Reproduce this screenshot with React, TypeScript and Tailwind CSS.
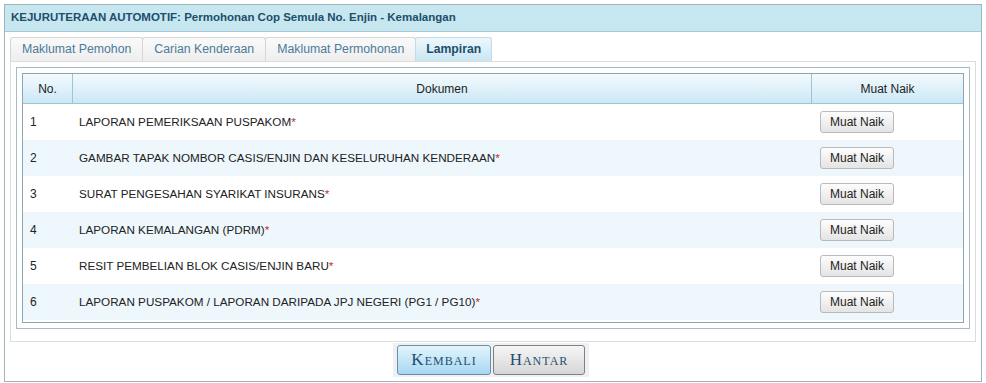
import React from 'react';

const rows = [
  'LAPORAN PEMERIKSAAN PUSPAKOM',
  'GAMBAR TAPAK NOMBOR CASIS/ENJIN DAN KESELURUHAN KENDERAAN',
  'SURAT PENGESAHAN SYARIKAT INSURANS',
  'LAPORAN KEMALANGAN (PDRM)',
  'RESIT PEMBELIAN BLOK CASIS/ENJIN BARU',
  'LAPORAN PUSPAKOM / LAPORAN DARIPADA JPJ NEGERI (PG1 / PG10)',
];

const tabs = ['Maklumat Pemohon', 'Carian Kenderaan', 'Maklumat Permohonan'];

export default function App() {
  return (
    <div className="w-[986px] h-[383px] bg-white pt-[4px] px-[4px] font-['Liberation_Sans',Arial,sans-serif] text-[12px] text-[#333]">
      <div className="h-[378px] border border-[#9fb4bc] flex flex-col">
        {/* Title */}
        <div className="h-[27px] shrink-0 bg-[#c6e6f0] border-b border-[#a9c9d4] flex items-center px-[6px] font-bold text-[11.5px] text-[#1d4e6b]">
          KEJURUTERAAN AUTOMOTIF: Permohonan Cop Semula No. Enjin - Kemalangan
        </div>

        <div className="px-[5px] pt-[5px] flex flex-col">
          {/* Tabs */}
          <div className="flex h-[24px] items-end">
            {tabs.map((t) => (
              <div
                key={t}
                className="h-[24px] px-[11px] flex items-center border border-b-0 border-[#d6d6d6] -mr-px rounded-t-[3px] bg-gradient-to-b from-[#fafafa] to-[#eeeeee] text-[#4a7c98] text-[12.3px]"
              >
                {t}
              </div>
            ))}
            <div className="h-[24px] px-[10px] flex items-center border border-b-0 border-[#c3dbe6] rounded-t-[3px] bg-gradient-to-b from-[#eef8fc] to-[#c9e6f3] text-[#1d4e6b] font-bold text-[12.2px]">
              Lampiran
            </div>
          </div>

          {/* Tab panel */}
          <div className="border border-[#dcdcdc] p-[5px] pb-[12px] h-[281px]">
            <div className="border border-[#a7bbc3] p-[5px] h-[262px]">
              <div className="border border-[#8ea6b2] h-[250px]">
                <div className="flex h-[30px] bg-gradient-to-b from-[#f3fafd] to-[#cbe8f6] border-b border-[#9ec3d6] text-[#222]">
                  <div className="w-[50px] shrink-0 border-r border-[#9ec3d6] flex items-center justify-center">No.</div>
                  <div className="flex-1 border-r border-[#9ec3d6] flex items-center justify-center">Dokumen</div>
                  <div className="w-[151px] shrink-0 flex items-center justify-center">Muat Naik</div>
                </div>
                {rows.map((r, i) => (
                  <div
                    key={r}
                    className={
                      'flex h-[36px] items-center text-[#222] ' +
                      (i % 2 === 1 ? 'bg-[#eef7fc]' : 'bg-white')
                    }
                  >
                    <div className="w-[50px] shrink-0 pl-[7px]">{i + 1}</div>
                    <div className="flex-1 pl-[6px] text-[11.7px]">
                      {r}
                      <span className="text-[#c0272d]">*</span>
                    </div>
                    <div className="w-[151px] shrink-0 pl-[8px]">
                      <button className="h-[22px] w-[74px] rounded-[3px] border border-[#b9b9b9] bg-gradient-to-b from-[#fdfdfd] to-[#e4e4e4] text-[#222] text-[12px]">
                        Muat Naik
                      </button>
                    </div>
                  </div>
                ))}
              </div>
            </div>
          </div>

          {/* Actions */}
          <div className="flex justify-center pt-px">
            <div className="flex gap-[2px] bg-[#eef0f4] px-[4px] py-[2px] -ml-[4px]">
              <button className="h-[30px] w-[94px] rounded-[3px] border border-[#6a8ea3] bg-gradient-to-b from-[#e3f4fc] to-[#a6d8f2] text-[#1f4f6f] font-['Liberation_Serif',serif] text-[17px] [font-variant:small-caps] tracking-[1px]">
                Kembali
              </button>
              <button className="h-[30px] w-[92px] rounded-[3px] border border-[#7d8286] bg-gradient-to-b from-[#f6f6f6] to-[#d6d6d6] text-[#1f4f6f] font-['Liberation_Serif',serif] text-[17px] [font-variant:small-caps] tracking-[1px]">
                Hantar
              </button>
            </div>
          </div>
        </div>
      </div>
    </div>
  );
}
